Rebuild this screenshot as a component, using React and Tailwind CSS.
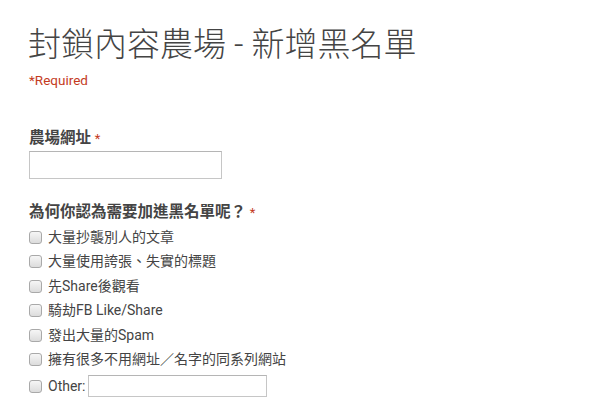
const OPTIONS = [
  '大量抄襲別人的文章',
  '大量使用誇張、失實的標題',
  '先Share後觀看',
  '騎劫FB Like/Share',
  '發出大量的Spam',
  '擁有很多不用網址／名字的同系列網站',
]

const FONT = 'font-["Roboto","Noto_Sans_CJK_TC",sans-serif]'

function Box() {
  return (
    <span className="w-[13px] h-[13px] shrink-0 rounded-[3px] border border-[#a9a9a9] bg-gradient-to-b from-[#f6f6f6] to-[#dcdcdc]" />
  )
}

export default function App() {
  return (
    <div className={`w-[600px] h-[416px] bg-white pl-[29px] pt-[25px] ${FONT}`}>
      <h1 className="h-[40px] leading-[40px] text-[33px] font-light text-[#444] -ml-[1px]">
        封鎖內容農場 - 新增黑名單
      </h1>
      <p className="mt-[6px] h-[18px] leading-[18px] text-[13.5px] text-[#c43b1d]">*Required</p>

      <div className="mt-[39px] h-[20px] leading-[20px] text-[15.5px] font-bold text-[#444]">
        農場網址 <span className="text-[#c43b1d] font-normal text-[13px]">*</span>
      </div>
      <div className="mt-[3px] w-[193px] h-[28px] border border-[#c6c6c6] border-t-[#b5b5b5] bg-white" />

      <div className="mt-[23px] h-[20px] leading-[20px] text-[15.5px] font-bold text-[#444]">
        為何你認為需要加進黑名單呢？ <span className="text-[#c43b1d] font-normal text-[13px]">*</span>
      </div>

      <div className="mt-[3px] flex flex-col">
        {OPTIONS.map(o => (
          <label key={o} className="h-[24.5px] flex items-center gap-[6px] text-[14px] text-[#444]">
            <Box />
            <span>{o}</span>
          </label>
        ))}
        <label className="h-[28px] flex items-center gap-[6px] text-[14px] text-[#444]">
          <Box />
          <span>Other:</span>
          <span className="-ml-[3px] w-[179px] h-[22px] border border-[#c6c6c6] border-t-[#b5b5b5] bg-white" />
        </label>
      </div>
    </div>
  )
}
